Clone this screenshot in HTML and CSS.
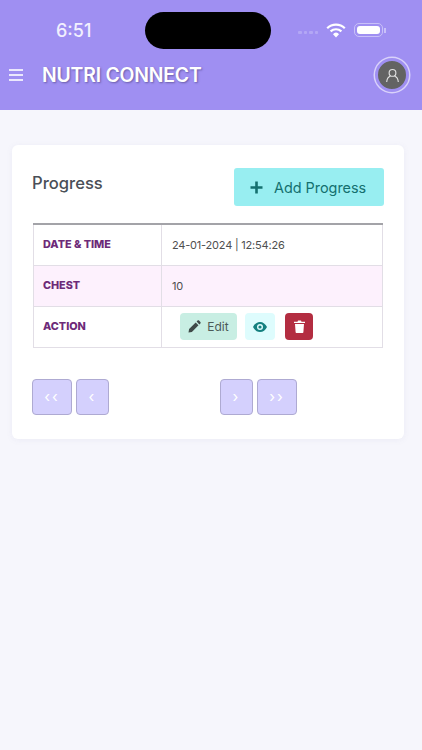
FILE: index.html
```html
<!DOCTYPE html>
<html lang="en">
<head>
    <meta charset="UTF-8">
    <meta name="viewport" content="width=device-width, initial-scale=1.0">
    <title>Nutri Connect</title>
    <link rel="stylesheet" href="styles.css">
</head>
<body>
    <header class="app-header">
        <div class="status-bar">
            <span class="status-time">6:51</span>
            <div class="island"></div>
            <div class="status-icons">
                <div class="signal-dots"><i></i><i></i><i></i><i></i></div>
                <svg class="wifi" width="20" height="15" viewBox="0 0 20 15">
                    <path d="M1.2 5.2a12.6 12.6 0 0 1 17.6 0" fill="none" stroke="#fff" stroke-width="2.2"/>
                    <path d="M4.6 8.4a7.8 7.8 0 0 1 10.8 0" fill="none" stroke="#fff" stroke-width="2.2"/>
                    <path d="M7 11.2a3.6 3.6 0 0 1 6 0L10 14.4z" fill="#fff"/>
                </svg>
                <div class="battery"><div class="battery-fill"></div></div>
                <div class="battery-cap"></div>
            </div>
        </div>
        <div class="nav-bar">
            <div class="menu-icon"><i></i><i></i><i></i></div>
            <h1 class="brand">NUTRI CONNECT</h1>
            <div class="avatar">
                <svg width="15" height="15" viewBox="0 0 16 16" fill="none" stroke="#e4e4e4" stroke-width="1.2">
                    <circle cx="8" cy="5.2" r="3.6"/>
                    <path d="M1.8 15c.3-3.6 2.4-5.8 3.8-6.2M14.2 15c-.3-3.6-2.4-5.8-3.8-6.2"/>
                </svg>
            </div>
        </div>
    </header>

    <main class="card">
        <div class="card-top">
            <h2 class="card-title">Progress</h2>
            <button type="button" class="btn-add">
                <svg width="13" height="13" viewBox="0 0 13 13"><path d="M6.5 0.5v12M0.5 6.5h12" stroke="#14706f" stroke-width="2.6"/></svg>
                <span>Add Progress</span>
            </button>
        </div>

        <table class="info-table">
            <tr>
                <th>DATE &amp; TIME</th>
                <td>24-01-2024 | 12:54:26</td>
            </tr>
            <tr class="row-pink">
                <th>CHEST</th>
                <td>10</td>
            </tr>
            <tr>
                <th>ACTION</th>
                <td>
                    <div class="actions">
                        <button type="button" class="btn-edit">
                            <svg width="13" height="13" viewBox="0 0 13 13"><path d="M0.5 12.5l.6-3.4 6.6-6.6 2.8 2.8-6.6 6.6zM8.6 1.6l1-1c.4-.4 1-.4 1.4 0l1.4 1.4c.4.4.4 1 0 1.4l-1 1z" fill="#3f4a48"/></svg>
                            <span>Edit</span>
                        </button>
                        <button type="button" class="btn-view">
                            <svg width="14" height="10" viewBox="0 0 14 10"><path fill-rule="evenodd" d="M7 0c3 0 5.6 2 7 5-1.4 3-4 5-7 5S1.4 8 0 5c1.4-3 4-5 7-5zm0 2a3 3 0 1 0 0 6 3 3 0 0 0 0-6z" fill="#14807f"/><circle cx="7" cy="5" r="1.6" fill="#14807f"/></svg>
                        </button>
                        <button type="button" class="btn-delete">
                            <svg width="11" height="13" viewBox="0 0 11 13"><path d="M0 1.8h3.500L4 .5h3l.5 1.300H11v1.300H0zM1 4h9l-.6 8c0 .6-.5 1-1 1H2.600c-.5 0-1-.4-1-1z" fill="#fff"/></svg>
                        </button>
                    </div>
                </td>
            </tr>
        </table>

        <div class="pager">
            <div class="pager-group">
                <button type="button" class="page-btn wide">&lsaquo;&lsaquo;</button>
                <button type="button" class="page-btn">&lsaquo;</button>
            </div>
            <div class="pager-group">
                <button type="button" class="page-btn">&rsaquo;</button>
                <button type="button" class="page-btn wide">&rsaquo;&rsaquo;</button>
            </div>
        </div>
    </main>
</body>
</html>
```

FILE: styles.css
```css
* {
    box-sizing: border-box;
}

body {
    margin: 0;
    min-height: 750px;
    background-color: #f6f6fc;
    font-family: Inter, "Liberation Sans", sans-serif;
    color: #444;
}

.app-header {
    height: 110px;
    background-color: #9f8ff2;
}

/* Status bar */
.status-bar {
    display: flex;
    align-items: center;
    height: 60px;
    padding: 0 0 0 56px;
}

.status-time {
    width: 89px;
    color: #f2effe;
    font-size: 18px;
    font-weight: 500;
}

.island {
    width: 126px;
    height: 37px;
    background-color: #000;
    border-radius: 19px;
}

.status-icons {
    display: flex;
    align-items: center;
    margin-left: 27px;
}

.signal-dots {
    display: flex;
    gap: 2px;
    margin-top: 5px;
    margin-right: 8px;
}

.signal-dots i {
    width: 3.5px;
    height: 3.5px;
    border-radius: 1px;
    background-color: #b3a7f5;
}

.wifi {
    margin-right: 8px;
}

.battery {
    width: 29px;
    height: 14px;
    padding: 2px;
    border: 1px solid #c9c1f8;
    border-radius: 5px;
}

.battery-fill {
    height: 100%;
    background-color: #fff;
    border-radius: 3px;
}

.battery-cap {
    width: 1.5px;
    height: 5px;
    margin-left: 1px;
    background-color: #c9c1f8;
}

/* Nav */
.nav-bar {
    display: flex;
    align-items: center;
    height: 30px;
    padding: 0 13px 0 9px;
}

.menu-icon {
    display: flex;
    flex-direction: column;
    gap: 3px;
    width: 14px;
    margin-right: 19px;
}

.menu-icon i {
    height: 2px;
    background-color: #ebe8fd;
}

.brand {
    flex: 1;
    margin: 0;
    color: #fff;
    font-size: 19.4px;
    font-weight: 600;
    letter-spacing: -0.2px;
    text-shadow: 1px 1px 2px rgba(70, 60, 120, 0.6);
}

.avatar {
    display: flex;
    align-items: center;
    justify-content: center;
    width: 34px;
    height: 34px;
    background-color: #636363;
    border: 3px solid #9f8ff2;
    border-radius: 50%;
    box-shadow: 0 0 0 1.5px #d9d2fa;
}

/* Card */
.card {
    width: 392px;
    height: 294px;
    margin: 35px 0 0 12px;
    padding: 23px 20px 0;
    background-color: #fff;
    border-radius: 6px;
    box-shadow: 0 1px 6px rgba(120, 120, 160, 0.08);
}

.card-top {
    display: flex;
    justify-content: space-between;
    align-items: center;
    height: 38px;
}

.card-title {
    margin: 0 0 8px;
    font-size: 16.6px;
    font-weight: 500;
    color: #4a4f57;
}

.btn-add {
    display: flex;
    align-items: center;
    gap: 11px;
    width: 150px;
    height: 38px;
    padding: 0 0 0 16px;
    background-color: #98eef1;
    border: none;
    border-radius: 3px;
    color: #14706f;
    font-family: inherit;
    font-size: 14.4px;
    white-space: nowrap;
}

/* Table */
.info-table {
    width: 350px;
    margin: 17px 0 0 1px;
    border-collapse: collapse;
    table-layout: fixed;
    border-top: 2px solid #a3a3a8;
}

.info-table th,
.info-table td {
    height: 41px;
    padding: 0 10px;
    border: 1.5px solid #e2dee6;
    text-align: left;
}

.info-table tr:first-child th,
.info-table tr:first-child td {
    border-top: none;
}

.info-table th {
    width: 128px;
    padding-left: 9px;
    color: #6d2a78;
    font-size: 10.8px;
    font-weight: 800;
}

.info-table td {
    color: #4f4f4f;
    font-size: 11px;
    letter-spacing: -0.2px;
}

.row-pink {
    background-color: #fdf1fd;
}

.actions {
    display: flex;
    align-items: center;
    gap: 8px;
    margin-left: 8px;
}

.actions button {
    display: flex;
    align-items: center;
    justify-content: center;
    height: 27px;
    padding: 0;
    border: none;
    font-family: inherit;
}

.btn-edit {
    gap: 6px;
    width: 57px;
    background-color: #c8eee3;
    border-radius: 4px;
    color: #4c5a58;
    font-size: 12px;
}

.btn-view {
    width: 30px;
    background-color: #defcfd;
    border-radius: 4px;
}

.actions .btn-delete {
    width: 28px;
    margin-left: 2px;
    background-color: #b32d41;
    border-radius: 4px;
}

/* Pager */
.pager {
    display: flex;
    gap: 111px;
    margin-top: 31px;
}

.pager-group {
    display: flex;
    gap: 4px;
}

.page-btn {
    width: 33px;
    height: 36px;
    padding: 0;
    background-color: #d4d0fd;
    border: 1.5px solid #aeaad2;
    border-radius: 4px;
    color: #fff;
    font-family: inherit;
    font-size: 15px;
    letter-spacing: 2px;
}

.page-btn.wide {
    width: 40px;
}
```
